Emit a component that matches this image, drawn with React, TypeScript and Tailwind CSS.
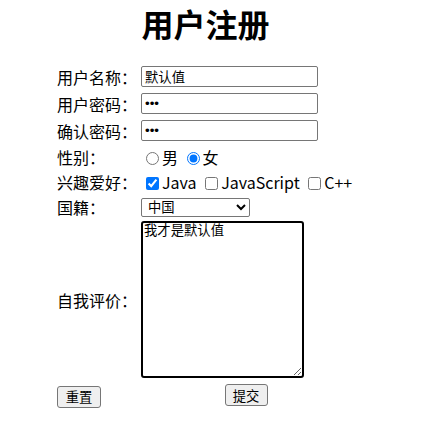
import { useEffect, useRef } from "react";

const inputCls =
  "w-[177px] h-[21px] border border-[#767676] rounded-[2px] px-[3px] font-['Liberation_Sans','Noto_Sans_CJK_SC',sans-serif] text-[13.33px] leading-none bg-white";

const tickCls = "ml-[5px] mr-[3px] mt-[3px] align-[-1px]";

function Row({ label, h, children }: { label: string; h: string; children: React.ReactNode }) {
  return (
    <div className={`flex items-center ${h}`}>
      <div className="w-[85px] pl-[1px] text-[16px] leading-none">{label}</div>
      <div className="flex-1 flex items-center">{children}</div>
    </div>
  );
}

export default function App() {
  const areaRef = useRef<HTMLTextAreaElement>(null);

  useEffect(() => {
    const el = areaRef.current;
    if (el) {
      el.focus();
      el.setSelectionRange(el.value.length, el.value.length);
    }
  }, []);

  return (
    <div className="bg-white w-[423px] h-[427px] font-['Noto_Sans_CJK_SC',sans-serif] text-black">
      <form className="ml-[56px] w-[299px]">
        <h1 className="text-center text-[32px] font-bold leading-[46px]">用户注册</h1>

        <div className="mt-[17px] flex flex-col">
          <Row label="用户名称：" h="h-[27px]">
            <input className={inputCls} defaultValue="默认值" />
          </Row>
          <Row label="用户密码：" h="h-[27px]">
            <input type="password" className={inputCls} defaultValue="123" />
          </Row>
          <Row label="确认密码：" h="h-[27px]">
            <input type="password" className={inputCls} defaultValue="123" />
          </Row>
          <Row label="性别：" h="h-[25px]">
            <div className="text-[16px] leading-[20px]">
              <input type="radio" name="sex" className={tickCls} />男{" "}
              <input type="radio" name="sex" defaultChecked className={tickCls} />女
            </div>
          </Row>
          <Row label="兴趣爱好：" h="h-[25px]">
            <div className="text-[16px] leading-[20px]">
              <input type="checkbox" defaultChecked className={tickCls} />Java{" "}
              <input type="checkbox" className={tickCls} />JavaScript{" "}
              <input type="checkbox" className={tickCls} />C++
            </div>
          </Row>
          <Row label="国籍：" h="h-[26px]">
            <select className="w-[109px] h-[19px] py-0 pl-[2px] border border-[#767676] rounded-[2px] font-['Liberation_Sans','Noto_Sans_CJK_SC',sans-serif] text-[13.33px] leading-[15px] bg-white">
              <option>中国</option>
              <option>美国</option>
              <option>日本</option>
            </select>
          </Row>
          <div className="flex items-center pt-[1px]">
            <div className="w-[85px] pl-[1px] text-[16px] leading-none">自我评价：</div>
            <textarea
              ref={areaRef}
              className="w-[163px] h-[157px] border-2 border-black rounded-[3px] px-[1px] pt-[1px] outline-none font-['Liberation_Mono','Noto_Sans_CJK_SC',monospace] text-[13.33px] leading-[16px] bg-white"
              defaultValue="我才是默认值"
            />
          </div>
          <div className="flex items-center mt-[5px]">
            <div className="w-[85px] pl-[1px]">
              <button type="reset" className="w-[44px] h-[22px] bg-[#efefef] border border-[#767676] rounded-[3px] text-[13.33px] leading-none">
                重置
              </button>
            </div>
            <div className="flex-1 flex justify-center pr-[4px]">
              <button type="button" className="w-[43px] h-[22px] bg-[#efefef] border border-[#767676] rounded-[3px] text-[13.33px] leading-none">
                提交
              </button>
            </div>
          </div>
        </div>
      </form>
    </div>
  );
}
